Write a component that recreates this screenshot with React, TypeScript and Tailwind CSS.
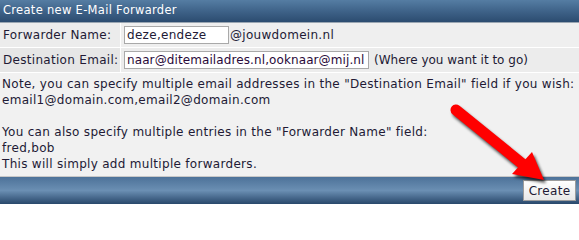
import React from 'react'

const font = { fontFamily: '"DejaVu Sans", Verdana, sans-serif', letterSpacing: '0.3px' }
const tight = { fontFamily: '"DejaVu Sans", Verdana, sans-serif', letterSpacing: '0px' }

const Arrow = () => (
  <svg className="absolute left-0 top-0 pointer-events-none" width="579" height="204" viewBox="0 0 579 204">
    <defs>
      <filter id="sh" x="-20%" y="-20%" width="140%" height="140%">
        <feGaussianBlur stdDeviation="1.6" />
      </filter>
    </defs>
    <g transform="translate(2,3)" opacity="0.7" filter="url(#sh)">
      <line x1="456" y1="110" x2="525" y2="166" stroke="#000" strokeWidth="11" strokeLinecap="round" />
      <polygon points="544,180 512,174 532,152" fill="#000" />
    </g>
    <line x1="456" y1="110" x2="525" y2="166" stroke="#ff0000" strokeWidth="11" strokeLinecap="round" />
    <polygon points="544,180 512,174 532,152" fill="#ff0000" />
  </svg>
)

export default function App() {
  return (
    <div className="relative w-[579px] h-[204px] overflow-hidden bg-[#f1f1f1] text-[12px] text-[#221a35]" style={font}>
      <div className="h-[23px] flex items-center px-[3px] text-white text-[11.5px] bg-gradient-to-b from-[#557da3] via-[#3f6389] to-[#2c4c70] border-b border-[#9aa6b2]">
        Create new E-Mail Forwarder
      </div>
      <div className="flex h-[25px] border-b border-white">
        <div className="w-[121px] flex items-center pl-[3px] bg-[#ececec] border-r border-white">Forwarder Name:</div>
        <div className="flex-1 flex items-center pl-[3px] bg-[#efefef]">
          <input className="w-[105px] h-[18px] border border-[#a9a9a9] bg-white px-[2px] text-[12px] text-[#221a35] outline-none" style={font} defaultValue="deze,endeze" />
          <span className="ml-[1px]">@jouwdomein.nl</span>
        </div>
      </div>
      <div className="flex h-[25px] border-b border-white">
        <div className="w-[121px] flex items-center pl-[3px] bg-[#e6e6e6] border-r border-white">Destination Email:</div>
        <div className="flex-1 flex items-center pl-[3px] bg-[#ececec]">
          <input className="w-[245px] h-[18px] border border-[#a9a9a9] bg-white px-[2px] text-[12px] text-[#2a0a3a] outline-none" style={{ ...tight, letterSpacing: '0.1px' }} defaultValue="naar@ditemailadres.nl,ooknaar@mij.nl" />
          <span className="ml-[5px]" style={tight}>(Where you want it to go)</span>
        </div>
      </div>
      <div className="px-[2px] pt-[3px] leading-[16px] h-[103px] whitespace-nowrap">
        <div>Note, you can specify multiple email addresses in the "Destination Email" field if you wish:</div>
        <div>email1@domain.com,email2@domain.com</div>
        <div>&nbsp;</div>
        <div>You can also specify multiple entries in the "Forwarder Name" field:</div>
        <div>fred,bob</div>
        <div>This will simply add multiple forwarders.</div>
      </div>
      <div className="h-[28px] border-t border-[#c8c8c8] flex items-center justify-end pr-[3px] bg-gradient-to-b from-[#4d7299] via-[#6b8fb3] to-[#29486b]">
        <button className="w-[53px] h-[21px] bg-gradient-to-b from-[#ffffff] to-[#e8e8e8] border border-[#9c9c9c] text-[12px] text-[#221a35]" style={font}>
          Create
        </button>
      </div>
      <Arrow />
    </div>
  )
}
